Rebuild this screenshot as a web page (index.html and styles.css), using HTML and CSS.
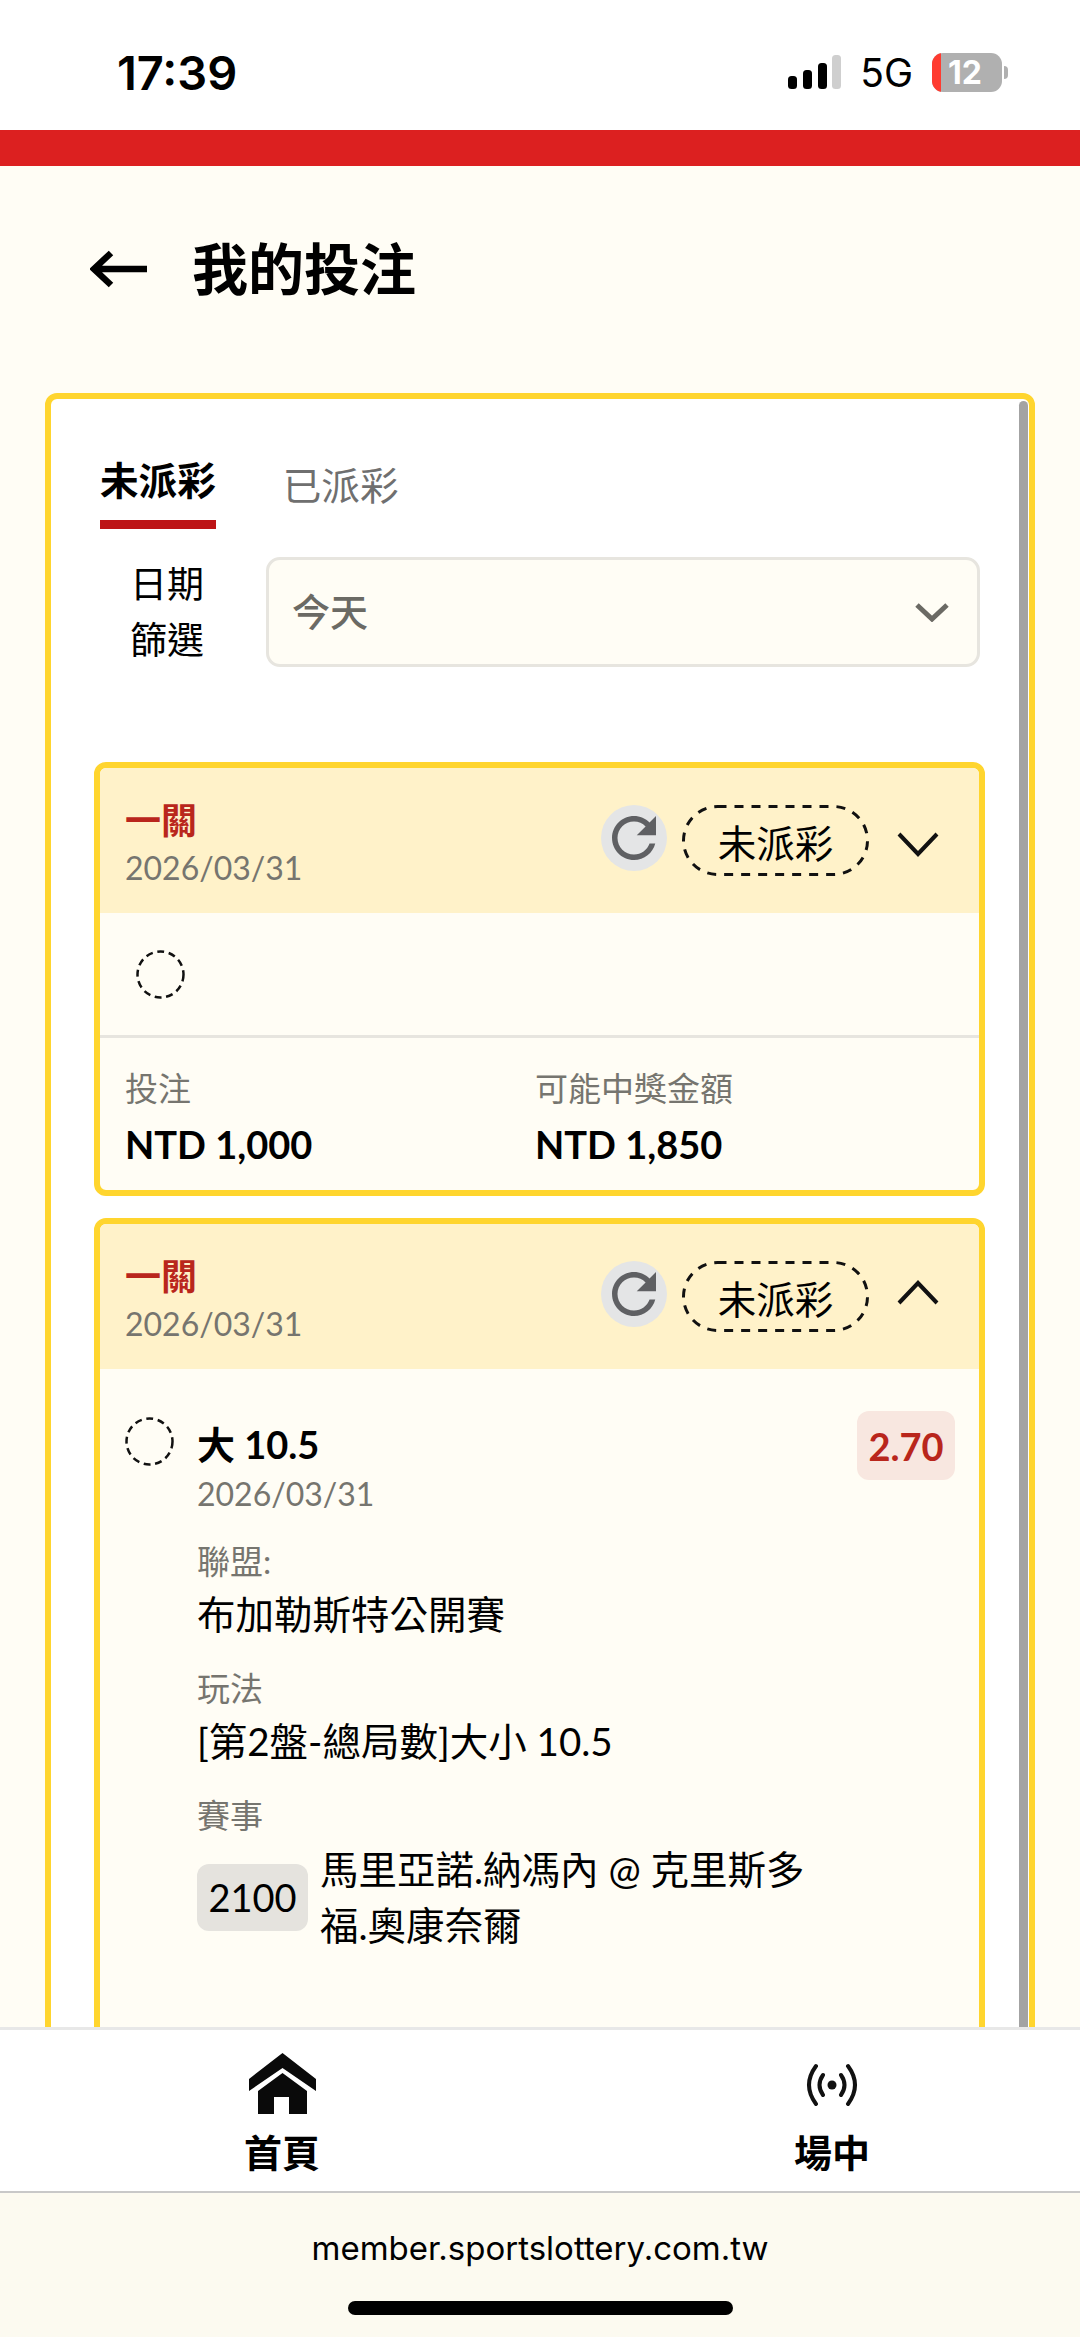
FILE: index.html
```html
<!DOCTYPE html>
<html lang="zh-Hant">
<head>
  <meta charset="UTF-8" />
  <meta name="viewport" content="width=device-width, initial-scale=1.0"/>
  <title>我的投注</title>
  <link rel="stylesheet" href="styles.css">
</head>
<body>
  <div class="statusbar">
    <span class="time">17:39</span>
    <div class="status-right">
      <svg class="signal" width="53" height="34" viewBox="0 0 53 34">
        <rect x="0" y="21" width="9" height="13" rx="3.5" fill="#000"/>
        <rect x="15" y="15" width="9" height="19" rx="3.5" fill="#000"/>
        <rect x="30" y="8" width="9" height="26" rx="3.5" fill="#000"/>
        <rect x="44" y="0" width="9" height="34" rx="3.5" fill="#cfcfcf"/>
      </svg>
      <span class="net">5G</span>
      <div class="battery">
        <div class="battery-body">
          <div class="battery-low"></div>
          <span class="battery-num">12</span>
        </div>
        <div class="battery-nub"></div>
      </div>
    </div>
  </div>
  <div class="redbar"></div>

  <main class="main">
    <div class="titlebar">
      <svg class="back" width="58" height="38" viewBox="0 0 58 38">
        <path d="M57 19H6M21 3L4 19l17 16" fill="none" stroke="#000" stroke-width="6.5"/>
      </svg>
      <h1>我的投注</h1>
    </div>

    <section class="panel">
      <div class="scrollbar"></div>
      <div class="tabs">
        <div class="tab tab-active">未派彩</div>
        <div class="tab">已派彩</div>
      </div>
      <div class="filter">
        <div class="filter-label">日期<br>篩選</div>
        <div class="select">
          <span>今天</span>
          <svg width="36" height="20" viewBox="0 0 36 20">
            <path d="M3 3l15 14L33 3" fill="none" stroke="#6b6a64" stroke-width="5"/>
          </svg>
        </div>
      </div>

      <div class="card card-first">
        <div class="card-head">
          <div>
            <div class="card-type">一關</div>
            <div class="date">2026/03/31</div>
          </div>
          <div class="head-right">
            <svg class="refresh" width="66" height="66" viewBox="0 0 24 24">
              <path fill="#5f6063" d="M17.65 6.35C16.2 4.9 14.21 4 12 4c-4.42 0-7.99 3.58-7.99 8s3.57 8 7.99 8c3.73 0 6.84-2.55 7.73-6h-2.08c-.82 2.33-3.04 4-5.65 4-3.31 0-6-2.69-6-6s2.69-6 6-6c1.66 0 3.14.69 4.22 1.78L13 11h7V4l-2.35 2.35z"/>
            </svg>
            <div class="pill">
              <svg class="pill-dash" width="187" height="71" viewBox="0 0 187 71">
                <rect x="1.5" y="1.5" width="184" height="68" rx="34" fill="none" stroke="#111" stroke-width="3" stroke-dasharray="9 8"/>
              </svg>
              未派彩
            </div>
            <svg class="chev chev-down" width="52" height="40" viewBox="0 0 52 40">
              <path d="M7 9l19 20L45 9" fill="none" stroke="#111" stroke-width="4"/>
            </svg>
          </div>
        </div>
        <div class="card-empty">
          <svg class="dash-circle" width="49" height="49" viewBox="0 0 49 49">
            <circle cx="24.5" cy="24.5" r="23" fill="none" stroke="#111" stroke-width="2.5" stroke-dasharray="7 4.6"/>
          </svg>
        </div>
        <div class="card-foot">
          <div>
            <div class="label">投注</div>
            <div class="amount">NTD 1,000</div>
          </div>
          <div>
            <div class="label">可能中獎金額</div>
            <div class="amount">NTD 1,850</div>
          </div>
        </div>
      </div>

      <div class="card">
        <div class="card-head">
          <div>
            <div class="card-type">一關</div>
            <div class="date">2026/03/31</div>
          </div>
          <div class="head-right">
            <svg class="refresh" width="66" height="66" viewBox="0 0 24 24">
              <path fill="#5f6063" d="M17.65 6.35C16.2 4.9 14.21 4 12 4c-4.42 0-7.99 3.58-7.99 8s3.57 8 7.99 8c3.73 0 6.84-2.55 7.73-6h-2.08c-.82 2.33-3.04 4-5.65 4-3.31 0-6-2.69-6-6s2.69-6 6-6c1.66 0 3.14.69 4.22 1.78L13 11h7V4l-2.35 2.35z"/>
            </svg>
            <div class="pill">
              <svg class="pill-dash" width="187" height="71" viewBox="0 0 187 71">
                <rect x="1.5" y="1.5" width="184" height="68" rx="34" fill="none" stroke="#111" stroke-width="3" stroke-dasharray="9 8"/>
              </svg>
              未派彩
            </div>
            <svg class="chev chev-up" width="52" height="40" viewBox="0 0 52 40">
              <path d="M7 29L26 9l19 20" fill="none" stroke="#111" stroke-width="4"/>
            </svg>
          </div>
        </div>
        <div class="bet">
          <svg class="dash-circle bet-circle" width="49" height="49" viewBox="0 0 49 49">
            <circle cx="24.5" cy="24.5" r="23" fill="none" stroke="#111" stroke-width="2.5" stroke-dasharray="7 4.6"/>
          </svg>
          <div class="bet-info">
            <div class="bet-top">
              <div>
                <div class="bet-name">大 10.5</div>
                <div class="date">2026/03/31</div>
              </div>
              <div class="odds">2.70</div>
            </div>
            <div class="field field-first">
              <div class="label">聯盟:</div>
              <div class="value">布加勒斯特公開賽</div>
            </div>
            <div class="field">
              <div class="label">玩法</div>
              <div class="value">[第2盤-總局數]大小 10.5</div>
            </div>
            <div class="field">
              <div class="label">賽事</div>
              <div class="match">
                <span class="match-tag">2100</span>
                <div class="match-name">馬里亞諾.納馮內 @ 克里斯多福.奧康奈爾</div>
              </div>
            </div>
          </div>
        </div>
      </div>
    </section>
  </main>

  <nav class="nav">
    <div class="nav-item">
      <svg width="67" height="64" viewBox="0 0 67 64">
        <path fill="#0a0a0a" d="M33.5 0L67 26v12L33.5 15 0 38V26z"/>
        <path fill="#0a0a0a" d="M33.5 20L58 38v23H40V44H25v17H9V38z"/>
      </svg>
      <span>首頁</span>
    </div>
    <div class="nav-item">
      <svg width="54" height="64" viewBox="0 0 54 64">
        <circle cx="27" cy="32" r="4.5" fill="#111"/>
        <path d="M11 13q-14 19 0 38M43 13q14 19 0 38M18 22q-7 10 0 20M36 22q7 10 0 20" fill="none" stroke="#111" stroke-width="4" stroke-linecap="round"/>
      </svg>
      <span>場中</span>
    </div>
  </nav>

  <div class="browserbar">
    <div class="url">member.sportslottery.com.tw</div>
    <div class="homebar"></div>
  </div>
</body>
</html>
```

FILE: styles.css
```css
* {
  margin: 0;
  padding: 0;
  box-sizing: border-box;
}

body {
  width: 1080px;
  height: 2337px;
  display: flex;
  flex-direction: column;
  overflow: hidden;
  background-color: #fffdf5;
  color: #000;
  font-family: Lato, "Noto Sans CJK TC", sans-serif;
}

/* phone status bar */
.statusbar {
  height: 130px;
  flex-shrink: 0;
  padding: 14px 72px 0 117px;
  display: flex;
  align-items: center;
  justify-content: space-between;
  background-color: #fff;
  font-family: Inter, sans-serif;
}

.time {
  font-size: 47px;
  font-weight: 600;
}

.status-right {
  display: flex;
  align-items: center;
  gap: 19px;
}

.net {
  font-size: 39px;
}

.battery {
  display: flex;
  align-items: center;
  gap: 2px;
}

.battery-body {
  width: 70px;
  height: 39px;
  display: flex;
  align-items: center;
  overflow: hidden;
  border-radius: 11px;
  background-color: #b0b0b0;
}

.battery-low {
  width: 9px;
  height: 100%;
  background-color: #ff3b30;
}

.battery-num {
  margin-left: 7px;
  font-size: 32px;
  font-weight: 700;
  color: #fff;
}

.battery-nub {
  width: 4px;
  height: 13px;
  border-radius: 0 4px 4px 0;
  background-color: #b0b0b0;
}

.redbar {
  height: 36px;
  flex-shrink: 0;
  background-color: #dc2020;
}

.main {
  flex: 1;
  overflow: hidden;
}

.titlebar {
  height: 80px;
  margin: 63px 0 84px;
  padding-left: 90px;
  display: flex;
  align-items: center;
  gap: 44px;
}

h1 {
  font-size: 56px;
  font-weight: 700;
  line-height: 80px;
}

/* big yellow box */
.panel {
  position: relative;
  margin: 0 45px;
  padding: 0 44px 0 43px;
  min-height: 1700px;
  background-color: #fff;
  border: 6px solid #ffd52e;
  border-radius: 12px 12px 0 0;
}

.scrollbar {
  position: absolute;
  top: 2px;
  right: 1px;
  bottom: 0;
  width: 9px;
  border-radius: 5px 5px 0 0;
  background-color: #a3a3a3;
}

.tabs {
  padding: 54px 0 0 6px;
  display: flex;
  gap: 67px;
}

.tab {
  margin-top: 5px;
  font-size: 38.6px;
  line-height: 54px;
  color: #6f6f6f;
}

.tab-active {
  margin-top: 0;
  padding-bottom: 13px;
  border-bottom: 9px solid #bd1416;
  font-weight: 700;
  color: #000;
}

.filter {
  height: 110px;
  margin: 28px 5px 0 6px;
  display: flex;
  align-items: center;
  gap: 32px;
}

.filter-label {
  width: 134px;
  font-size: 37px;
  line-height: 56px;
  text-align: center;
}

.select {
  flex: 1;
  height: 110px;
  padding: 0 27px 0 23px;
  display: flex;
  align-items: center;
  justify-content: space-between;
  background-color: #fffdf5;
  border: 3px solid #e7e5df;
  border-radius: 14px;
  font-size: 38px;
  font-weight: 500;
  color: #6b6a64;
}

.select span {
  margin-bottom: 5px;
}

/* bet cards */
.card {
  margin-top: 22px;
  background-color: #fffdf5;
  border: 6px solid #ffd52e;
  border-radius: 12px;
  overflow: hidden;
}

.card-first {
  margin-top: 95px;
}

.card-head {
  height: 145px;
  padding: 27px 35px 0 25px;
  display: flex;
  justify-content: space-between;
  background-color: #fff2c9;
}

.card-type {
  font-size: 36px;
  font-weight: 700;
  line-height: 50px;
  color: #b9261c;
}

.date {
  font-size: 32px;
  line-height: 46px;
  color: #76756f;
}

.head-right {
  margin-top: 10px;
  display: flex;
  align-items: flex-start;
}

.refresh {
  border-radius: 50%;
  background-color: #e4e5e6;
}

.pill {
  position: relative;
  width: 187px;
  height: 71px;
  margin: 0 23px 0 15px;
  display: flex;
  align-items: center;
  justify-content: center;
  font-size: 38.5px;
}

.pill-dash {
  position: absolute;
  top: 0;
  left: 0;
}

.chev-down {
  margin-top: 20px;
}

.chev-up {
  margin-top: 13px;
}

.dash-circle {
  flex-shrink: 0;
  display: block;
}

.card-empty {
  height: 122px;
  padding: 37px 0 0 36px;
}

.card-foot {
  padding: 25px 25px 18px;
  display: grid;
  grid-template-columns: 410px 1fr;
  border-top: 3px solid #e7e5df;
}

.label {
  font-size: 33px;
  line-height: 50px;
  color: #76756f;
}

.amount {
  margin-top: 3px;
  font-size: 38px;
  font-weight: 700;
  line-height: 56px;
}

.bet {
  padding: 42px 24px 140px 25px;
  display: flex;
  gap: 23px;
}

.bet-circle {
  margin-top: 6px;
}

.bet-info {
  flex: 1;
}

.bet-top {
  display: flex;
  justify-content: space-between;
  align-items: flex-start;
}

.bet-name {
  margin-top: 8px;
  font-size: 38px;
  font-weight: 700;
  line-height: 50px;
}

.bet-top .date {
  margin-top: 2px;
}

.odds {
  width: 98px;
  height: 69px;
  display: flex;
  align-items: center;
  justify-content: center;
  background-color: #f8e7e0;
  border-radius: 12px;
  font-size: 38px;
  font-weight: 700;
  color: #b9261c;
}

.field {
  margin-top: 21px;
}

.field-first {
  margin-top: 19px;
}

.value {
  font-size: 38.5px;
  line-height: 56px;
}

.match {
  margin-top: 1px;
  display: flex;
  align-items: center;
  gap: 12px;
}

.match-tag {
  width: 111px;
  height: 67px;
  flex-shrink: 0;
  display: flex;
  align-items: center;
  justify-content: center;
  background-color: #e5e3de;
  border-radius: 12px;
  font-size: 38px;
}

.match-name {
  width: 500px;
  font-size: 38.5px;
  line-height: 56px;
}

/* bottom nav */
.nav {
  height: 166px;
  flex-shrink: 0;
  padding: 23px 0 0 182px;
  display: flex;
  gap: 350px;
  background-color: #fff;
  border-top: 3px solid #e8e8e8;
  border-bottom: 2px solid #c8c8c8;
}

.nav-item {
  width: 200px;
  display: flex;
  flex-direction: column;
  align-items: center;
  gap: 10px;
  font-size: 38px;
  font-weight: 700;
  line-height: 50px;
}

.browserbar {
  height: 144px;
  flex-shrink: 0;
  padding-top: 35px;
  display: flex;
  flex-direction: column;
  align-items: center;
  background-color: #fcfaf0;
}

.url {
  font-family: Inter, sans-serif;
  font-size: 33px;
  line-height: 40px;
}

.homebar {
  width: 385px;
  height: 14px;
  margin-top: 33px;
  border-radius: 7px;
  background-color: #000;
}
```
